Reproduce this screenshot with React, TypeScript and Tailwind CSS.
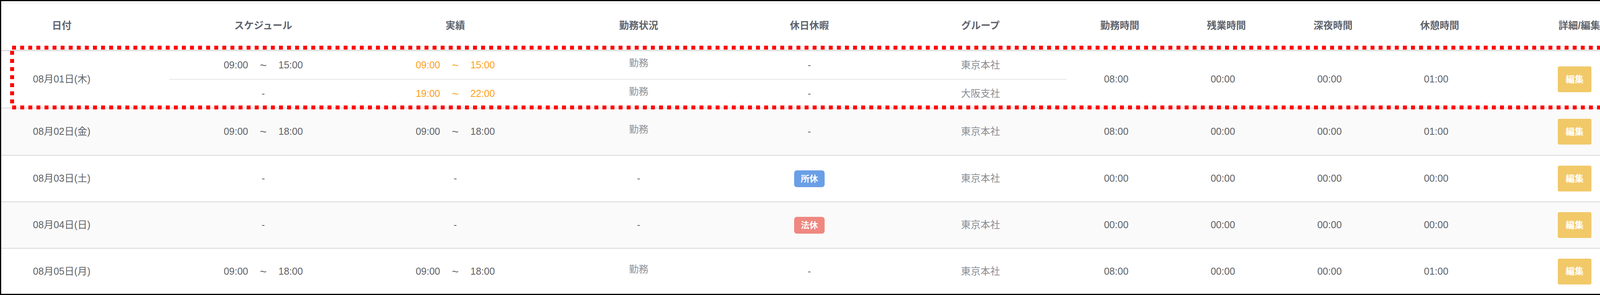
import React from "react";

type Sub = {
  sched: [string, string] | null;
  actual: [string, string] | null;
  status: string;
  leave: string;
  group: string;
};

type Row = {
  date: string;
  subs: Sub[];
  work: string;
  over: string;
  night: string;
  rest: string;
  striped: boolean;
  h: string;
  orange?: boolean;
};

const rows: Row[] = [
  {
    date: "08月01日(木)",
    subs: [
      { sched: ["09:00", "15:00"], actual: ["09:00", "15:00"], status: "勤務", leave: "-", group: "東京本社" },
      { sched: null, actual: ["19:00", "22:00"], status: "勤務", leave: "-", group: "大阪支社" },
    ],
    work: "08:00",
    over: "00:00",
    night: "00:00",
    rest: "01:00",
    striped: false,
    h: "h-[147px]",
    orange: true,
  },
  {
    date: "08月02日(金)",
    subs: [{ sched: ["09:00", "18:00"], actual: ["09:00", "18:00"], status: "勤務", leave: "-", group: "東京本社" }],
    work: "08:00",
    over: "00:00",
    night: "00:00",
    rest: "01:00",
    striped: true,
    h: "h-[121px]",
  },
  {
    date: "08月03日(土)",
    subs: [{ sched: null, actual: null, status: "-", leave: "所休", group: "東京本社" }],
    work: "00:00",
    over: "00:00",
    night: "00:00",
    rest: "00:00",
    striped: false,
    h: "h-[119px]",
  },
  {
    date: "08月04日(日)",
    subs: [{ sched: null, actual: null, status: "-", leave: "法休", group: "東京本社" }],
    work: "00:00",
    over: "00:00",
    night: "00:00",
    rest: "00:00",
    striped: true,
    h: "h-[119px]",
  },
  {
    date: "08月05日(月)",
    subs: [{ sched: ["09:00", "18:00"], actual: ["09:00", "18:00"], status: "勤務", leave: "-", group: "東京本社" }],
    work: "08:00",
    over: "00:00",
    night: "00:00",
    rest: "01:00",
    striped: false,
    h: "flex-1",
  },
];

function TimeRange({ value, orange }: { value: [string, string] | null; orange?: boolean }) {
  if (!value) return <span className="text-[#606266]">-</span>;
  return (
    <div className={orange ? "flex items-center gap-[30px] text-[#ff9f1a]" : "flex items-center gap-[30px] text-[#606266]"}>
      <span>{value[0]}</span>
      <span className="text-[30px] leading-none">~</span>
      <span>{value[1]}</span>
    </div>
  );
}

function Leave({ v }: { v: string }) {
  if (v === "所休")
    return (
      <span className="flex h-[43px] w-[78px] items-center justify-center rounded-[7px] bg-[#6a9fe6] text-[22px] font-bold text-white">
        所休
      </span>
    );
  if (v === "法休")
    return (
      <span className="flex h-[43px] w-[78px] items-center justify-center rounded-[7px] bg-[#ef8880] text-[22px] font-bold text-white">
        法休
      </span>
    );
  return <span className="text-[#606266]">{v}</span>;
}

function SubCells({ s, orange }: { s: Sub; orange?: boolean }) {
  return (
    <>
      <div className="flex w-[482px] items-center justify-center">
        <TimeRange value={s.sched} />
      </div>
      <div className="flex w-[501px] items-center justify-center">
        <TimeRange value={s.actual} orange={orange} />
      </div>
      <div className="flex w-[438px] items-center justify-center">
        <span className={s.status === "-" ? "text-[#606266]" : "pb-[10px] text-[#909399]"}>{s.status}</span>
      </div>
      <div className="flex w-[436px] items-center justify-center">
        <Leave v={s.leave} />
      </div>
      <div className="flex w-[440px] items-center justify-center text-[#8a8d93]">{s.group}</div>
    </>
  );
}

export default function App() {
  return (
    <div className="relative h-[755px] w-[4174px] bg-white font-['Liberation_Sans','Noto_Sans_CJK_JP',sans-serif] text-[25px]">
      <div className="flex h-full flex-col border-[3px] border-black">
        {/* header */}
        <div className="mt-[3px] flex h-[125px] border-y-[3px] border-t-[#f0f0f0] border-b-[#dcdcdc] pb-[5px] font-bold text-[#5f646d]">
          <div className="flex w-[430px] items-center justify-center pr-[120px]">日付</div>
          <div className="flex w-[482px] items-center justify-center">スケジュール</div>
          <div className="flex w-[501px] items-center justify-center">実績</div>
          <div className="flex w-[438px] items-center justify-center">勤務状況</div>
          <div className="flex w-[436px] items-center justify-center">休日休暇</div>
          <div className="flex w-[440px] items-center justify-center">グループ</div>
          <div className="flex w-[273px] items-center justify-center">勤務時間</div>
          <div className="flex w-[273px] items-center justify-center">残業時間</div>
          <div className="flex w-[273px] items-center justify-center">深夜時間</div>
          <div className="flex w-[273px] items-center justify-center">休憩時間</div>
          <div className="flex w-[349px] items-center justify-center pl-[93px]">詳細/編集</div>
        </div>

        {rows.map((r, i) => (
          <div
            key={r.date}
            className={[
              "flex",
              r.h,
              r.striped ? "bg-[#fafafa]" : "bg-white",
              i < rows.length - 1 ? "border-b-[3px] border-[#e3e3e3]" : "",
            ].join(" ")}
          >
            <div className="flex w-[430px] items-center justify-center pr-[120px] text-[#606266]">{r.date}</div>
            <div className="flex w-[2297px] flex-col">
              {r.subs.map((s, j) => (
                <div
                  key={j}
                  className={j < r.subs.length - 1 ? "flex flex-1 border-b-[2px] border-[#e6e6e6]" : "flex flex-1"}
                >
                  <SubCells s={s} orange={r.orange} />
                </div>
              ))}
            </div>
            <div className="flex w-[273px] items-center justify-center pr-[18px] text-[#606266]">{r.work}</div>
            <div className="flex w-[273px] items-center justify-center pr-[18px] text-[#606266]">{r.over}</div>
            <div className="flex w-[273px] items-center justify-center pr-[18px] text-[#606266]">{r.night}</div>
            <div className="flex w-[273px] items-center justify-center pr-[18px] text-[#606266]">{r.rest}</div>
            <div className="flex w-[349px] items-center justify-center pl-[69px]">
              <button className="flex h-[66px] w-[86px] items-center justify-center rounded-[4px] bg-[#f1c968] text-[23px] font-bold text-white">
                編集
              </button>
            </div>
          </div>
        ))}
      </div>

      {/* annotation */}
      <svg className="pointer-events-none absolute left-0 top-0" width="4174" height="755">
        <rect
          x="31"
          y="122"
          width="4110"
          height="153"
          fill="none"
          stroke="#ff0000"
          strokeWidth="10"
          strokeDasharray="10 10.7"
        />
      </svg>
    </div>
  );
}
